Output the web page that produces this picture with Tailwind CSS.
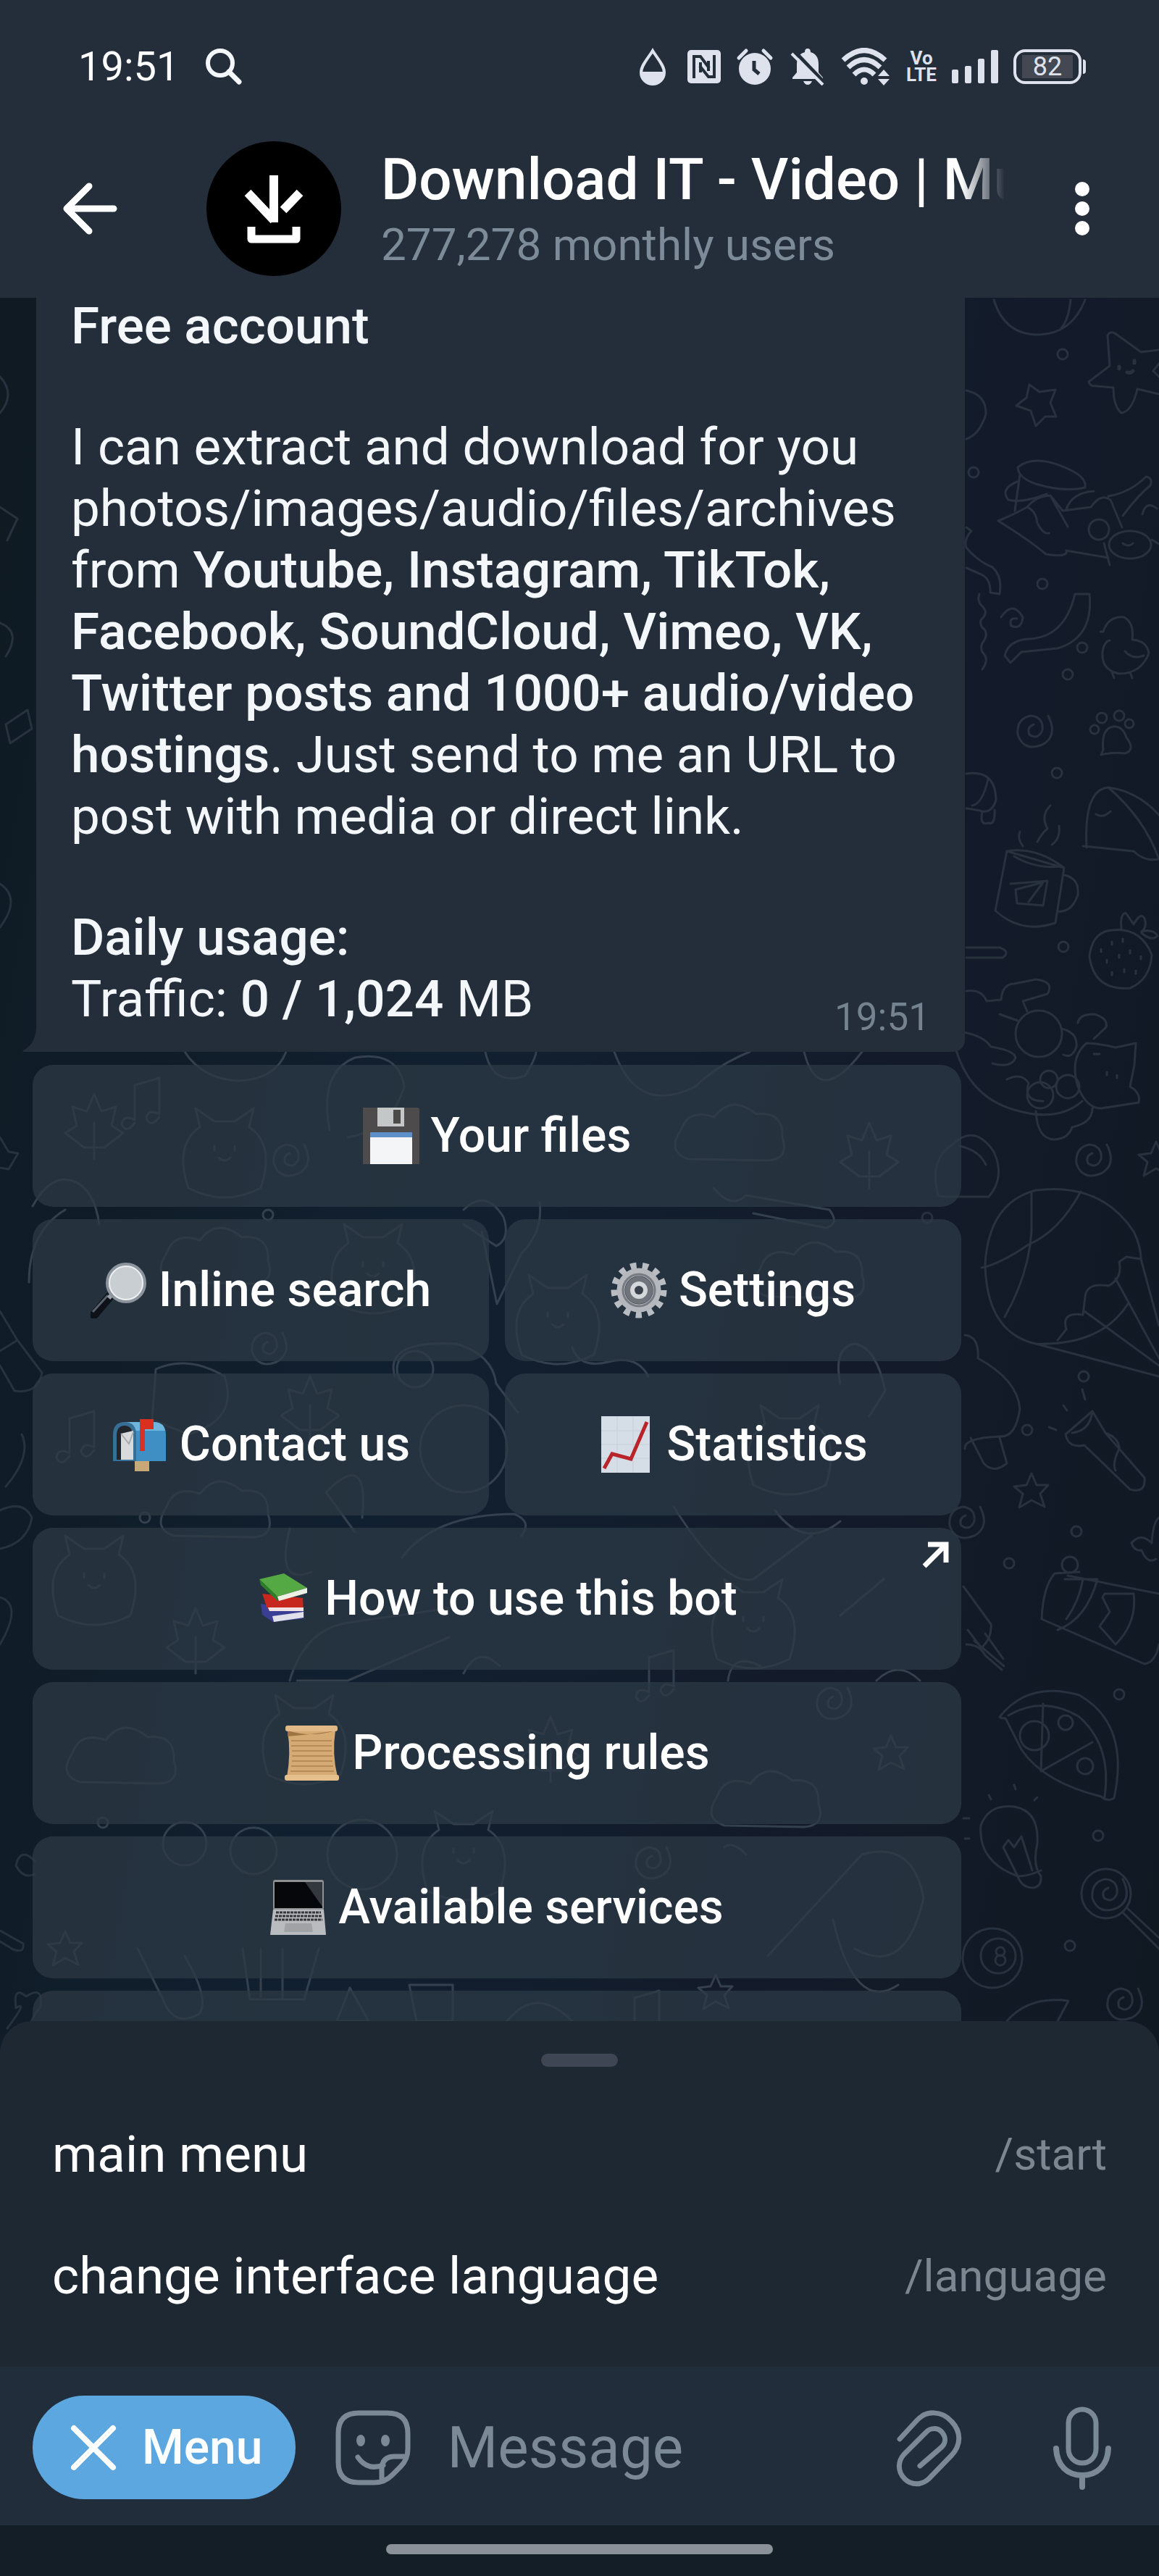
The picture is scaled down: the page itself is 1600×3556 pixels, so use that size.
<!DOCTYPE html>
<html lang="en">
<head>
  <meta charset="UTF-8" />
  <meta name="viewport" content="width=device-width, initial-scale=1" />
  <title>Download IT - Video | Music</title>
  <script src="https://cdn.jsdelivr.net/npm/@tailwindcss/browser@4"></script>
</head>
<body class="bg-[#141e27] font-['Roboto','Noto_Sans',sans-serif] text-white">
  <div class="flex h-screen flex-col overflow-hidden">

    <!-- Header -->
    <header class="relative z-10 shrink-0 bg-[#242e3a]">
      <!-- Status bar -->
      <div class="flex h-[164px] items-center justify-between pt-5 pr-[101px] pl-[108px]">
        <div class="flex items-center gap-9">
          <span class="text-[56px] leading-[64px]">19:51</span>
          <svg class="size-[52px]" viewBox="0 0 52 52" fill="none" stroke="#f4f7fa" stroke-width="6" stroke-linecap="round"><circle cx="21" cy="21" r="17" /><path d="M33 33 L47 47" stroke-width="7" /></svg>
        </div>
        <div class="flex items-center text-[#dde2ec]">
          <svg class="h-[52px] w-10" viewBox="0 0 40 52"><path d="M20 4 C26 14 36 24 36 34 A16 16 0 0 1 4 34 C4 24 14 14 20 4Z" fill="none" stroke="currentColor" stroke-width="4" /><path d="M4 33 H36 A16 16 0 0 1 4 33Z" fill="currentColor" /></svg>
          <svg class="ml-[27px] size-[48px]" viewBox="0 0 48 48"><rect x="1" y="1" width="46" height="46" rx="5" fill="currentColor" /><path d="M10 40 V10 H19 L31 26 M38 8 V38 H30 L18 23 M19 18 V32 M30 16 V30" fill="none" stroke="#242e3a" stroke-width="4" /></svg>
          <svg class="ml-5 size-[52px]" viewBox="0 0 52 52"><circle cx="26" cy="29" r="22" fill="currentColor" /><path d="M4 14 L14 4 M48 14 L38 4" stroke="currentColor" stroke-width="5" stroke-linecap="round" /><path d="M25 18 V30 L32 36" stroke="#242e3a" stroke-width="5" fill="none" /></svg>
          <svg class="ml-[21px] size-[52px]" viewBox="0 0 52 52"><path d="M26 1 q4 0 4 5 C40 9 41 17 41 24 V34 L47 41 V43 H5 V41 L11 34 V24 C11 17 12 9 22 6 q0-5 4-5Z M20 46 h12 q-2 5-6 5 t-6-5Z" fill="currentColor" /><path d="M8 5 L51 50" stroke="#242e3a" stroke-width="5" /><path d="M4 8 L47 51" stroke="currentColor" stroke-width="4" /></svg>
          <svg class="ml-[20px] h-[52px] w-[70px]" viewBox="0 0 70 52"><path d="M3 17 Q32 -10 61 17" fill="none" stroke="currentColor" stroke-width="7" /><path d="M10 27 Q32 6 54 27" fill="none" stroke="currentColor" stroke-width="7" /><path d="M18 37 Q32 23 46 37" fill="none" stroke="currentColor" stroke-width="7" /><circle cx="32" cy="46" r="5" fill="currentColor" /><path d="M59 30 l8 9 h-16Z M59 52 l8 -9 h-16Z" fill="currentColor" /></svg>
          <span class="ml-5 flex flex-col text-center font-['Liberation_Sans_Narrow','Roboto',sans-serif] text-[26px] leading-[23px] font-bold"><span>Vo</span><span>LTE</span></span>
          <svg class="ml-[20px] h-[48px] w-[66px]" viewBox="0 0 66 48" fill="currentColor"><rect x="1" y="28" width="9" height="19" rx="2" /><rect x="19" y="23" width="9" height="24" rx="2" /><rect x="37" y="13" width="9" height="34" rx="2" /><rect x="55" y="1" width="10" height="46" rx="2" /></svg>
          <span class="ml-5 flex h-[48px] w-[94px] items-center justify-center rounded-[16px] border-4 border-current"><span class="flex h-8 w-[70px] items-center justify-center bg-[#434852] text-[36px] leading-8">82</span></span>
          <span class="ml-0.5 h-5 w-1 rounded-r bg-current"></span>
        </div>
      </div>
      <!-- Chat title -->
      <div class="flex h-[247px] items-center pr-[94px] pl-[84px]">
        <button type="button" aria-label="Back" class="shrink-0"><svg class="size-[80px]" viewBox="0 0 80 80" fill="none" stroke="#fff" stroke-width="9" stroke-linecap="round" stroke-linejoin="round"><path d="M73 40 H8 M39 9 L8 40 L39 71" /></svg></button>
        <svg class="ml-[121px] size-[186px] shrink-0" viewBox="0 0 186 186"><circle cx="93" cy="93" r="93" fill="#000" /><path d="M93 47 V104 M57 71 L93 109 M129 71 L106 95" fill="none" stroke="#fff" stroke-width="12" /><path d="M87 100 V112 H99 V100Z" fill="#fff" /><path d="M62 118 V135 H124 V118" fill="none" stroke="#fff" stroke-width="11" stroke-linejoin="round" /></svg>
        <div class="ml-[55px] flex min-w-0 flex-1 flex-col gap-2">
          <h1 class="mr-[21px] overflow-hidden text-[80px] leading-[92px] font-medium whitespace-nowrap [mask-image:linear-gradient(to_right,black_calc(100%-60px),transparent)]">Download IT - Video | Music</h1>
          <p class="text-[62px] leading-[72px] whitespace-nowrap text-[#7d8b99]">277,278 monthly users</p>
        </div>
        <button type="button" aria-label="More options" class="ml-[74px] shrink-0"><svg class="h-[80px] w-6" viewBox="0 0 24 80" fill="#fff"><circle cx="12" cy="13" r="10" /><circle cx="12" cy="40" r="10" /><circle cx="12" cy="67" r="10" /></svg></button>
      </div>
    </header>

    <!-- Chat -->
    <main class="relative min-h-0 flex-1 overflow-hidden bg-[linear-gradient(100deg,#0f1a22_0%,#112030_40%,#131a29_75%,#101922_100%)]">
      <!-- Wallpaper -->
      <svg class="absolute inset-0 size-full" viewBox="0 411 1600 2423" preserveAspectRatio="xMaxYMin slice" fill="none" stroke="#28323f" stroke-width="3" stroke-linecap="round" stroke-linejoin="round" aria-hidden="true">
        <defs>
          <path id="star" d="M0 -24 L7 -8 L23 -8 L12 4 L18 22 L0 13 L-17 23 L-12 4 L-24 -6 L-7 -8Z" />
          <path id="spiral" d="M20 -20 Q34 8 12 20 Q-14 30 -22 6 Q-24 -16 -4 -20 Q14 -18 12 0 Q6 14 -6 6 Q-10 -4 0 -8" />
          <circle id="dot" r="7" />
          <path id="leaf" d="M0 40 V-10 M0 -50 L10 -26 L30 -32 L24 -6 L40 4 L14 24 H-14 L-40 4 L-24 -6 L-30 -32 L-10 -26Z" />
          <path id="cat" d="M-50 50 Q-70 -10 -34 -34 L-40 -60 L-14 -42 H14 L40 -60 L34 -34 Q70 -10 50 50 Q0 76 -50 50 M-14 -8 v6 M14 -8 v6 M-8 8 q8 8 16 0" />
          <path id="note" d="M-14 26 V-22 L20 -32 V18 M-14 26 q-16 -8 -18 6 q6 14 18 -2 M20 18 q-16 -8 -18 6 q6 14 18 -2" />
          <path id="cloud" d="M-60 30 Q-90 20 -70 -10 Q-60 -40 -24 -28 Q0 -60 34 -32 Q72 -36 70 0 Q80 30 50 32Z" />
        </defs>
        <!-- right column, top -->
        <path d="M1372 414 Q1387 463 1435 462 Q1480 460 1498 414 M1478 414 Q1475 442 1465 453" />
        <path d="M1503 527 L1532 505 L1529 463 Q1533 455 1542 462 L1575 486 L1600 483 M1600 544 L1570 537 Q1563 568 1548 570 Q1537 561 1537 535 L1513 533 Q1504 533 1503 527 M1600 502 L1592 512 L1600 520" />
        <path d="M1545 506 v3 M1566 498 v3 M1556 514 q5 2 8 -2" stroke-width="5" />
        <path d="M1403 560 L1417 549 L1421 531 L1435 541 L1457 538 L1450 556 L1458 575 L1443 575 L1430 588 L1423 567Z" />
        <path d="M1334 539 Q1362 545 1361 572 Q1352 600 1334 606" />
        <path d="M1405 645 Q1430 625 1480 650 Q1500 660 1498 673 Q1470 680 1430 668 Q1406 660 1405 645 M1408 655 L1401 705 M1404 665 Q1380 675 1392 690 Q1410 695 1445 682 M1378 719 Q1400 710 1418 700 Q1430 685 1450 684 L1474 727 M1418 700 Q1430 705 1432 722 Q1440 738 1448 736 M1378 719 Q1420 745 1444 765 Q1475 770 1472 760 L1530 770 M1450 684 L1467 705 L1506 700 Q1520 680 1533 690 L1549 728 M1530 685 Q1560 680 1582 658 Q1592 660 1588 670 Q1570 685 1550 712 M1472 703 Q1480 680 1510 678" />
        <circle cx="1517" cy="731" r="14" /><ellipse cx="1560" cy="752" rx="29" ry="19" /><path d="M1524 750 l8 30 M1577 710 q5 -20 20 -8 M1590 745 l10 6 M1550 750 q8 6 14 0" />
        <path d="M1334 728 L1341 733 Q1330 745 1334 756 Q1350 775 1370 783 Q1384 795 1380 820 L1367 818 Q1368 800 1355 793 L1334 784" />
        <path d="M1352 820 q-4 10 5 18 q8 8 -3 18 q-2 8 6 14 q4 8 -4 18 q-4 8 3 16 q6 8 -3 20" />
        <path d="M1387 905 Q1392 884 1420 882 Q1470 880 1484 820 H1504 Q1510 880 1460 895 L1410 900 L1395 915Z" />
        <path d="M1382 852 Q1398 828 1412 852 Q1410 870 1396 864 Q1392 852 1404 854" />
        <path d="M1523 872 Q1530 850 1552 852 Q1566 860 1563 883 Q1584 885 1586 902 Q1575 930 1545 930 Q1520 925 1522 900 Q1524 886 1532 884 M1523 872 h-4 M1553 899 q10 12 26 6 M1535 928 l3 8 M1560 928 l3 8" />
        <use href="#spiral" x="1427" y="1008" />
        <path d="M1523 1035 Q1520 1005 1537 1003 Q1550 1002 1555 1018 Q1568 1035 1553 1040 Q1535 1038 1520 1042Z" /><circle cx="1521" cy="991" r="7" /><circle cx="1545" cy="988" r="7" /><circle cx="1559" cy="999" r="6" /><circle cx="1511" cy="1007" r="6" />
        <path d="M1334 1068 Q1374 1062 1375 1104 Q1370 1122 1356 1120 Q1350 1118 1334 1116 M1356 1120 q-4 20 8 16 q10 4 9 -18 M1364 1076 Q1356 1110 1342 1112" />
        <path d="M1500 1170 Q1496 1090 1530 1087 Q1570 1092 1600 1125 M1530 1087 Q1580 1130 1600 1186 Q1580 1190 1565 1175 L1495 1168 M1513 1124 q10 6 20 -4" />
        <path d="M1390 1175 L1374 1257 Q1410 1290 1457 1274 L1469 1198Z M1390 1175 Q1430 1168 1469 1198 M1400 1182 Q1430 1200 1464 1196 M1469 1208 Q1490 1212 1488 1235 Q1480 1260 1460 1258 M1395 1220 L1446 1216 L1440 1250 L1404 1247 L1402 1228 L1440 1218 L1420 1245" />
        <path d="M1412 1168 q-8 -10 -4 -20 M1432 1162 q8 -14 14 -18 q-10 -18 4 -32 M1452 1166 q12 -8 10 -26" />
        <path d="M1504 1320 Q1508 1286 1535 1284 Q1575 1280 1590 1318 Q1588 1352 1560 1364 Q1510 1368 1504 1320 M1548 1282 Q1546 1262 1554 1260 L1565 1276 Q1575 1258 1580 1268 Q1584 1280 1576 1286 Q1592 1282 1598 1292 Q1590 1300 1576 1288" />
        <path d="M1520 1310 v4 M1535 1300 v4 M1550 1296 v4 M1528 1325 v4 M1545 1318 v4 M1560 1312 v4 M1575 1320 v4 M1535 1342 v4 M1552 1338 v4 M1568 1340 v4" />
        <path d="M1334 1308 H1380 Q1396 1314 1384 1322 H1334 M1334 1368 Q1355 1365 1362 1382 L1382 1380 Q1384 1358 1400 1358 L1430 1352 Q1456 1355 1446 1372 L1412 1382 L1418 1396 M1380 1400 L1405 1409" />
        <ellipse cx="1434" cy="1427" rx="32" ry="32" />
        <path d="M1330 1425 Q1358 1430 1368 1445 Q1400 1450 1402 1460 Q1396 1475 1370 1468 M1320 1450 Q1340 1515 1400 1532 Q1460 1550 1494 1520 M1465 1420 Q1488 1425 1486 1445 Q1480 1462 1468 1456 M1488 1412 Q1490 1400 1510 1400 Q1530 1405 1527 1418 L1510 1434 M1488 1500 Q1476 1460 1500 1440 Q1515 1440 1540 1446 L1568 1440 L1566 1470 L1560 1500 Q1575 1508 1572 1522 L1520 1530 Q1500 1530 1488 1500 M1510 1455 h8 M1528 1480 v4 M1542 1484 v4 M1390 1490 Q1410 1480 1420 1495 Q1412 1520 1440 1520 M1430 1534 Q1432 1572 1455 1573 Q1475 1572 1480 1556 Q1508 1550 1508 1530" />
        <circle cx="1448" cy="1490" r="12" /><circle cx="1436" cy="1512" r="18" /><circle cx="1474" cy="1500" r="16" />
        <!-- right column, middle -->
        <use href="#spiral" x="1508" y="1600" /><use href="#star" x="1596" y="1600" />
        <path d="M1295 1650 Q1282 1600 1315 1580 Q1345 1550 1372 1590 Q1388 1625 1365 1652 H1315 Q1295 1652 1295 1650 M1325 1582 Q1352 1588 1361 1608" />
        <path d="M1360 1745 Q1365 1660 1430 1643 Q1520 1632 1565 1700 Q1575 1720 1575 1738 M1360 1745 Q1362 1840 1430 1855 Q1520 1858 1557 1800 M1424 1647 V1700 Q1420 1760 1387 1818 M1492 1645 Q1462 1700 1420 1718 Q1380 1745 1355 1750 M1575 1738 L1555 1735 L1545 1742 Q1550 1765 1530 1775 Q1500 1770 1498 1790 L1495 1815 Q1465 1810 1472 1835 L1460 1850 M1430 1855 L1600 1900 M1575 1738 L1600 1830 M1497 1810 L1600 1885 M1540 1765 L1600 1875" />
        <path d="M1332 1843 Q1352 1845 1350 1875 Q1405 1905 1408 1945 Q1402 1985 1380 1983 Q1330 1985 1332 2000 M1340 1985 L1358 2020 Q1372 2035 1390 2020 L1380 1985" />
        <path d="M1471 1980 L1508 1948 L1526 1978 L1580 2040 Q1582 2062 1560 2056 L1497 1995 Q1475 2000 1471 1980 M1508 1948 Q1505 1975 1480 1978 M1526 1978 Q1545 1985 1545 2000 Q1535 2020 1540 2030" />
        <path d="M1494 1918 l4 14 M1468 1940 l5 7 M1448 1970 l10 4" /><use href="#star" x="1424" y="2058" />
        <!-- right column, lower -->
        <use href="#spiral" x="1333" y="2100" />
        <path d="M1456 2172 Q1440 2190 1438 2235 L1580 2297 Q1595 2295 1600 2270 M1474 2175 L1600 2200 M1470 2180 L1515 2180 Q1500 2235 1460 2250 M1495 2180 Q1490 2210 1472 2235 M1525 2200 H1565 Q1570 2240 1540 2270 L1518 2245 L1532 2225 L1522 2205Z M1456 2172 L1490 2170" />
        <path d="M1562 2130 Q1575 2115 1590 2130 Q1592 2100 1600 2095 M1562 2130 Q1566 2142 1576 2140 q8 20 20 12" /><circle cx="1477" cy="2160" r="11" />
        <path d="M1330 2190 L1368 2242 Q1370 2260 1355 2275 L1336 2250 M1334 2270 Q1352 2270 1360 2285 L1383 2305 M1345 2265 L1386 2300 M1360 2255 L1385 2290" />
        <path d="M1380 2370 Q1420 2320 1490 2340 Q1560 2380 1538 2482 Q1530 2488 1520 2480 Q1440 2460 1410 2415 L1388 2372 Q1380 2372 1380 2370 M1392 2368 Q1440 2340 1490 2370 Q1535 2410 1525 2480 M1440 2352 L1437 2445 L1508 2405" />
        <circle cx="1428" cy="2396" r="20" /><circle cx="1471" cy="2378" r="10" /><circle cx="1498" cy="2438" r="11" />
        <path d="M1405 2590 Q1350 2570 1354 2520 Q1365 2490 1400 2494 Q1435 2500 1432 2545 Q1425 2575 1437 2590 Q1438 2605 1425 2606 Q1410 2605 1405 2590 M1405 2590 L1385 2550 L1392 2540 L1400 2550 L1410 2535 L1425 2582 M1405 2590 Q1420 2590 1437 2582" />
        <path d="M1365 2478 l3 6 M1400 2464 l2 6 M1428 2485 l4 -4 M1330 2510 h8 M1332 2538 h6" />
        <circle cx="1527" cy="2614" r="34" /><use href="#spiral" x="1530" y="2614" /><path d="M1556 2634 L1600 2675 M1550 2640 L1600 2690" />
        <circle cx="1370" cy="2703" r="41" /><circle cx="1378" cy="2700" r="24" /><circle cx="1381" cy="2694" r="6" /><circle cx="1381" cy="2706" r="7" />
        <use href="#spiral" x="1551" y="2765" /><path d="M1390 2790 Q1420 2755 1475 2762 L1460 2790" />
        <use href="#dot" x="1467" y="489" /><use href="#dot" x="1344" y="652" /><use href="#dot" x="1439" y="806" /><use href="#dot" x="1494" y="894" /><use href="#dot" x="1474" y="931" /><use href="#dot" x="1459" y="1067" /><use href="#dot" x="1468" y="1307" /><use href="#dot" x="1280" y="1681" /><use href="#dot" x="1496" y="1900" /><use href="#dot" x="1418" y="1974" /><use href="#dot" x="1486" y="2114" /><use href="#dot" x="1393" y="2158" /><use href="#dot" x="1545" y="2339" /><use href="#dot" x="1516" y="2534" /><use href="#dot" x="1477" y="2686" />
        <!-- left edge -->
        <path d="M0 520 q22 24 0 50 M0 700 l24 16 l-14 30 M0 860 q30 12 8 46 M8 1000 l30 -20 l6 26 l-30 20Z M0 1220 q30 20 0 60 M0 1570 L12 1590 L25 1592 L12 1614 L0 1612 M0 1810 L24 1850 L58 1895 Q52 1925 20 1920 L0 1885 M0 1865 L24 1850 M30 1980 q14 30 -22 72 M0 2085 Q32 2070 44 2095 Q38 2130 0 2138 M0 2205 Q32 2215 0 2270 M0 2665 l32 18 q2 14 -14 8 L0 2680 M22 2575 q6 -26 26 -6 M22 2575 q10 20 26 12 M10 2800 Q40 2760 22 2772 Q18 2740 36 2756 Q60 2740 56 2770 Q40 2790 42 2800" />
        <!-- behind the keyboard -->
        <g stroke="#34404d">
          <path d="M255 1452 Q280 1490 330 1492 Q380 1490 395 1452 M455 1560 Q440 1480 490 1460 Q550 1450 558 1500 Q540 1560 480 1570 M670 1452 Q680 1500 725 1485 Q740 1460 740 1452 M848 1452 Q880 1540 960 1500 Q990 1470 1035 1452 M1110 1452 Q1130 1530 1190 1452" />
          <path d="M640 1670 Q670 1640 695 1680 Q705 1710 685 1720 L640 1690 M745 1660 Q750 1700 720 1730 L686 1800 L665 1700" />
          <path d="M45 1665 Q70 1620 100 1630 Q130 1640 137 1690 M40 1770 Q40 1700 90 1670 M985 1640 Q1010 1670 1030 1650 L1145 1670 Q1160 1690 1140 1695 L1040 1675" />
          <path d="M215 1890 Q260 1870 310 1900 Q330 1960 260 1980 L210 1960Z M545 1900 Q530 1850 630 1855 Q680 1870 685 1910 L715 1950 M790 1860 Q800 1890 840 1880 Q880 1870 895 1900 M1160 1910 Q1150 1860 1180 1855 Q1210 1860 1222 1920 L1200 1955 M500 2095 Q510 2000 450 2060 L490 2115 M555 2150 Q600 2090 710 2090 Q735 2100 720 2120 M400 2110 q-20 80 30 60" />
          <circle cx="573" cy="1890" r="25" /><circle cx="640" cy="2000" r="60" /><circle cx="255" cy="2545" r="30" /><circle cx="350" cy="2555" r="32" /><circle cx="500" cy="2560" r="48" />
          <path d="M1070 2085 Q1110 2140 1160 2100 M930 2080 Q1000 2190 1040 2180 L1120 2120 M1160 2230 l60 -50 M400 2320 Q420 2250 480 2240 L620 2220 M410 2320 H480 L620 2260 M640 2310 q20 -40 50 -10 M1005 2320 Q1010 2280 1050 2300 M1210 2320 Q1240 2290 1270 2320" />
          <path d="M190 2690 L225 2760 Q240 2800 275 2780 Q290 2760 255 2700 M335 2690 L345 2760 H420 L440 2690 M360 2690 v70 M390 2690 v70 M565 2740 h60 v50 h-50Z M465 2790 l18 -46 l26 46Z M700 2790 Q740 2740 790 2790 M1150 2650 Q1180 2780 1240 2740 M1000 2550 Q1010 2540 1030 2560 M1060 2700 L1190 2560 Q1260 2540 1275 2620 Q1250 2730 1180 2690" />
          <use href="#cat" x="515" y="1750" /><use href="#cloud" x="300" y="1740" /><use href="#spiral" x="370" y="1860" /><use href="#leaf" x="428" y="1950" /><use href="#cloud" x="1010" y="1570" /><use href="#leaf" x="1200" y="1600" /><use href="#cat" x="770" y="1820" /><use href="#cloud" x="300" y="2090" /><use href="#cat" x="1040" y="2240" /><use href="#cat" x="130" y="2180" /><use href="#note" x="910" y="2310" /><use href="#spiral" x="1150" y="2350" /><use href="#cloud" x="1060" y="2490" /><use href="#cat" x="420" y="2400" /><use href="#star" x="90" y="2690" /><use href="#note" x="890" y="2780" /><use href="#star" x="988" y="2750" /><use href="#dot" x="370" y="1677" /><use href="#dot" x="200" y="2095" /><use href="#dot" x="142" y="2516" /><use href="#cat" x="640" y="2560" />
          <use href="#leaf" x="130" y="1560" /><use href="#cat" x="310" y="1590" /><use href="#spiral" x="400" y="1600" /><use href="#note" x="200" y="1520" /><use href="#cloud" x="1120" y="1760" /><use href="#note" x="110" y="1980" /><use href="#cat" x="1090" y="2000" /><use href="#leaf" x="270" y="2270" /><use href="#cloud" x="170" y="2430" /><use href="#leaf" x="760" y="2420" /><use href="#star" x="1230" y="2420" /><use href="#spiral" x="900" y="2570" />
        </g>
      </svg>

      <div class="relative flex w-full max-w-[1332px] flex-col gap-[18px] pl-[45px]">
        <!-- Message -->
        <article class="relative ml-[5px] flex flex-col gap-[82px] rounded-br-[16px] bg-[#242e3a] px-12 pb-[31px] text-[71px] leading-[85px] text-[#f4f7fa]">
          <svg class="absolute bottom-0 -left-5 h-8 w-6" viewBox="0 0 24 32" aria-hidden="true"><path d="M20 0 Q18 22 2 30 Q0 32 4 32 H24 V0Z" fill="#242e3a" /></svg>
          <p class="mb-1 leading-[77px] font-medium">Free account</p>
          <p>I can extract and download for you<br />photos/images/audio/files/archives<br />from <b class="font-medium">Youtube, Instagram, TikTok,<br />Facebook, SoundCloud, Vimeo, VK,<br />Twitter posts and 1000+ audio/video<br />hostings</b>. Just send to me an URL to<br />post with media or direct link.</p>
          <div class="flex items-end justify-between">
            <p><b class="font-medium">Daily usage:</b><br />Traffic: <b class="font-medium">0 / 1,024</b> MB</p>
            <time class="-mb-3.5 text-[53px] leading-[62px] text-[#75828f]">19:51</time>
          </div>
        </article>

        <!-- Inline keyboard -->
        <div class="mr-[5px] grid grid-cols-2 gap-x-[22px] gap-y-[17px] text-[66px] leading-[78px] font-medium whitespace-nowrap">
          <button type="button" class="col-span-2 flex h-[196px] items-center justify-center gap-4 rounded-[28px] bg-[#2c3946]/75">
            <svg class="size-[78px]" viewBox="0 0 78 78"><path d="M0 0 H76 L78 2 V78 H0Z" fill="#4d4b4c" /><rect x="20" y="0" width="37" height="26" fill="#c3c7c7" /><rect x="42" y="3" width="10" height="19" fill="#4a4a48" /><rect x="10" y="34" width="58" height="44" fill="#f4f5f7" /><rect x="10" y="34" width="58" height="7" fill="#5d8fc9" /></svg>
            Your files
          </button>
          <button type="button" class="flex h-[196px] items-center justify-center gap-4 rounded-[28px] bg-[#2c3946]/75">
            <svg class="size-[78px]" viewBox="0 0 78 78"><path d="M27 47 L5 73" stroke="#0e1218" stroke-width="12" stroke-linecap="round" /><path d="M24 46 L3 69" stroke="#59616c" stroke-width="3" /><path d="M34 40 L25 50" stroke="#9aa0a8" stroke-width="6" /><circle cx="49" cy="29" r="26" fill="#c9ced3" stroke="#8c949d" stroke-width="4" /><circle cx="49" cy="29" r="23" fill="none" stroke="#eceef0" stroke-width="2" /></svg>
            Inline search
          </button>
          <button type="button" class="flex h-[196px] items-center justify-center gap-4 rounded-[28px] bg-[#2c3946]/75">
            <svg class="size-[78px]" viewBox="0 0 78 78" fill="none"><circle cx="39" cy="39" r="34" stroke="#b9bcc0" stroke-width="9" stroke-dasharray="8.24 8.24" /><circle cx="39" cy="39" r="25" stroke="#b4b7bb" stroke-width="11" /><circle cx="39" cy="39" r="19" fill="#6f757b" /><circle cx="39" cy="39" r="22" stroke="#767c82" stroke-width="3" /><circle cx="39" cy="39" r="12" fill="#d5d8da" /><circle cx="39" cy="39" r="6" fill="#3a424b" /></svg>
            Settings
          </button>
          <button type="button" class="flex h-[196px] items-center justify-center gap-4 rounded-[28px] bg-[#2c3946]/75">
            <svg class="size-[78px]" viewBox="0 0 78 78"><rect x="32" y="60" width="20" height="16" fill="#c9a878" /><path d="M18 8 H60 Q75 9 75 26 V62 H34 V26Z" fill="#3f8fc4" /><path d="M18 8 H60 Q72 9 74 20 H34Z" fill="#6fb6de" /><path d="M2 62 V26 Q2 8 18 8 Q34 8 34 26 V62Z" fill="#376f96" /><path d="M7 60 V27 Q7 13 18 13 Q29 13 29 27 V60Z" fill="#20262c" /><path d="M13 24 L30 20 V60 L13 60Z" fill="#d9dadb" /><path d="M13 24 L24 38 L30 22" fill="none" stroke="#a9abad" stroke-width="2" /><path d="M39 48 V4 H58 V18 H46 V48Z" fill="#d9301f" /></svg>
            Contact us
          </button>
          <button type="button" class="flex h-[196px] items-center justify-center gap-4 rounded-[28px] bg-[#2c3946]/75">
            <svg class="size-[78px]" viewBox="0 0 78 78"><rect x="4" y="0" width="67" height="78" fill="#d5dde6" /><path d="M4 20 H71 M4 39 H71 M4 58 H71 M26 0 V78 M48 0 V78" stroke="#c6cfda" stroke-width="1" /><path d="M8 72 L19 52 L45 59 L67 8" fill="none" stroke="#b8242a" stroke-width="5" /></svg>
            Statistics
          </button>
          <a href="#how-to" class="relative col-span-2 flex h-[196px] items-center justify-center gap-4 rounded-[28px] bg-[#2c3946]/75">
            <svg class="size-[78px]" viewBox="0 0 78 78"><path d="M6 46 L8 61 L23 71 L66 66 V56Z" fill="#3a3f95" /><path d="M22 63 L65 57 V65 L24 71Z" fill="#dfe0ea" /><path d="M8 32 L14 50 L18 56 H65 L64 38Z" fill="#c6281e" /><path d="M16 51 H65 V56 H18Z" fill="#efe3e3" /><path d="M4 12 L38 4 L70 24 L29 36Z" fill="#55a944" /><path d="M4 12 L29 36 V42 L6 20Z" fill="#2d7d2b" /><path d="M29 36 L70 24 V31 L31 42Z" fill="#edf0e4" /></svg>
            How to use this bot
            <svg class="absolute top-[18px] right-4 size-[38px]" viewBox="0 0 38 38" fill="none" stroke="#fff" stroke-width="7" aria-hidden="true"><path d="M3 35 L33 5 M8 5 H33 V30" /></svg>
          </a>
          <button type="button" class="col-span-2 flex h-[196px] items-center justify-center gap-4 rounded-[28px] bg-[#2c3946]/75">
            <svg class="size-[78px]" viewBox="0 0 78 78"><path d="M5 8 H71 Q66 40 74 72 H4 Q10 40 5 8Z" fill="#d6aa73" /><path d="M10 22 H66 M10 29 H66 M11 36 H66 M11 43 H67 M11 50 H67 M10 57 H68 M9 64 H69" stroke="#b88a55" stroke-width="2" /><path d="M5 8 Q38 18 71 8 Q50 12 5 16Z" fill="#9e7443" /><rect x="2" y="1" width="72" height="8" rx="3" fill="#e0b986" /><rect x="1" y="69" width="75" height="8" rx="3" fill="#e5c08d" /></svg>
            Processing rules
          </button>
          <button type="button" class="col-span-2 flex h-[196px] items-center justify-center gap-4 rounded-[28px] bg-[#2c3946]/75">
            <svg class="size-[78px]" viewBox="0 0 78 78"><rect x="4" y="1" width="70" height="42" rx="3" fill="#8e9092" /><rect x="6" y="4" width="66" height="36" fill="#05070a" /><path d="M48 4 H72 V38Z" fill="#33383e" /><path d="M4 42 H74 L77 77 H0Z" fill="#b9bbbe" /><path d="M8 46 H70 M7 51 H71 M6 56 H72" stroke="#33363a" stroke-width="3" stroke-dasharray="4 1" /><path d="M21 61 H57 L59 73 H19Z" fill="#a0a2a5" /></svg>
            Available services
          </button>
          <button type="button" aria-label="More" class="col-span-2 h-[196px] rounded-[28px] bg-[#2c3946]/75"></button>
        </div>
      </div>
    </main>

    <!-- Bot commands -->
    <section class="relative z-10 -mt-11 shrink-0 rounded-t-[44px] bg-[#1e2833] pt-[45px] pb-[41px]">
      <div class="mx-auto mb-[37px] h-[18px] w-[106px] rounded-full bg-[#3d4652]"></div>
      <button type="button" class="flex h-[168px] w-full items-center justify-between px-[72px]"><span class="text-[71px] leading-[84px]">main menu</span><span class="text-[62px] leading-[72px] text-[#7b8691]">/start</span></button>
      <button type="button" class="flex h-[168px] w-full items-center justify-between px-[72px]"><span class="text-[71px] leading-[84px]">change interface language</span><span class="text-[62px] leading-[72px] text-[#7b8691]">/language</span></button>
    </section>

    <!-- Message bar -->
    <form class="flex h-[219px] shrink-0 items-center bg-[#212d3a] pt-1 pr-[62px] pl-[45px] text-[#7b8895]">
      <button type="button" class="flex h-[143px] shrink-0 items-center gap-8 rounded-full bg-[#5da7e0] pr-[45px] pl-[49px] text-[66px] leading-[78px] font-medium text-white">
        <svg class="size-[70px]" viewBox="0 0 70 70" stroke="#fff" stroke-width="8" stroke-linecap="round"><path d="M8 8 L62 62 M62 8 L8 62" /></svg>
        Menu
      </button>
      <button type="button" aria-label="Stickers" class="ml-[53px] shrink-0"><svg class="size-[108px]" viewBox="0 0 108 108" fill="none" stroke="currentColor" stroke-width="7" stroke-linecap="round" stroke-linejoin="round"><path d="M34 6 H74 Q102 6 102 34 V56 Q102 70 92 80 L80 92 Q70 102 56 102 H34 Q6 102 6 74 V34 Q6 6 34 6Z M66 100 V84 Q66 66 84 66 H100 M33 67 Q46 86 68 78" /><ellipse cx="37" cy="44" rx="6" ry="8" fill="currentColor" stroke="none" /><ellipse cx="71" cy="44" rx="6" ry="8" fill="currentColor" stroke="none" /></svg></button>
      <input type="text" aria-label="Message" placeholder="Message" class="ml-[49px] min-w-0 flex-1 bg-transparent text-[80px] leading-[92px] outline-none placeholder:text-[#7b8895]" />
      <button type="button" aria-label="Attach" class="shrink-0"><svg class="h-[108px] w-[96px]" viewBox="0 0 96 108" fill="none" stroke="currentColor" stroke-width="7" stroke-linecap="round" stroke-linejoin="round"><path d="M8 42 L31 17 C44 2 66 2 80 18 C94 33 92 51 80 64 L48 97 C38 106 24 106 15 97 C5 87 5 73 14 63 L44 33 C50 26 60 26 66 32 C72 39 72 47 66 53 L36 79" /></svg></button>
      <button type="button" aria-label="Voice message" class="ml-[120px] shrink-0"><svg class="h-[116px] w-[88px]" viewBox="0 0 88 116" fill="none" stroke="currentColor" stroke-width="7" stroke-linecap="round"><rect x="25" y="5" width="38" height="74" rx="19" /><path d="M8 59 C9 83 24 96 44 96 C64 96 79 83 80 59 M44 96 V112" stroke-width="8" /></svg></button>
    </form>

    <!-- Gesture bar -->
    <div class="flex h-[70px] shrink-0 justify-center bg-[#141e27] pt-[26px]"><div class="h-[14px] w-1/3 rounded-full bg-[#8b9198]"></div></div>
  </div>
</body>
</html>
